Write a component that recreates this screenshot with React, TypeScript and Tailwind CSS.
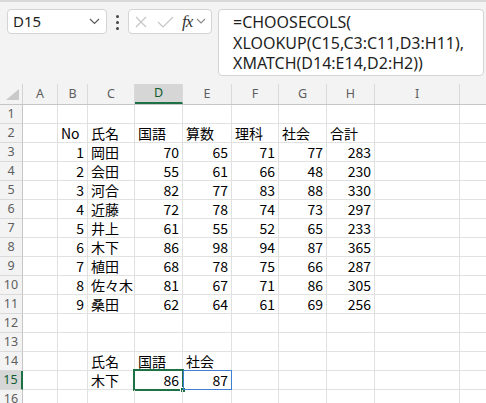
import React from "react";

const COLS = [
  { k: "A", w: 35 },
  { k: "B", w: 30 },
  { k: "C", w: 47 },
  { k: "D", w: 48 },
  { k: "E", w: 49 },
  { k: "F", w: 47 },
  { k: "G", w: 48 },
  { k: "H", w: 48 },
  { k: "I", w: 85 },
  { k: "", w: 60 },
];

type Cell = { t: string; r?: boolean };

const data: [number, string, number, number, number, number, number][] = [
  [1, "岡田", 70, 65, 71, 77, 283],
  [2, "会田", 55, 61, 66, 48, 230],
  [3, "河合", 82, 77, 83, 88, 330],
  [4, "近藤", 72, 78, 74, 73, 297],
  [5, "井上", 61, 55, 52, 65, 233],
  [6, "木下", 86, 98, 94, 87, 365],
  [7, "植田", 68, 78, 75, 66, 287],
  [8, "佐々木", 81, 67, 71, 86, 305],
  [9, "桑田", 62, 64, 61, 69, 256],
];

function rowCells(r: number): Record<string, Cell> {
  if (r === 2)
    return {
      B: { t: "No" },
      C: { t: "氏名" },
      D: { t: "国語" },
      E: { t: "算数" },
      F: { t: "理科" },
      G: { t: "社会" },
      H: { t: "合計" },
    };
  if (r >= 3 && r <= 11) {
    const d = data[r - 3];
    return {
      B: { t: String(d[0]), r: true },
      C: { t: d[1] },
      D: { t: String(d[2]), r: true },
      E: { t: String(d[3]), r: true },
      F: { t: String(d[4]), r: true },
      G: { t: String(d[5]), r: true },
      H: { t: String(d[6]), r: true },
    };
  }
  if (r === 14) return { C: { t: "氏名" }, D: { t: "国語" }, E: { t: "社会" } };
  if (r === 15) return { C: { t: "木下" }, D: { t: "86", r: true }, E: { t: "87", r: true } };
  return {};
}

const font = { fontFamily: '"Noto Sans CJK JP", "Noto Sans", sans-serif' };

export default function App() {
  const rows = Array.from({ length: 16 }, (_, i) => i + 1);
  return (
    <div className="w-[486px] h-[403px] overflow-hidden bg-[#f3f3f3] relative" style={font}>
      {/* top shadow line */}
      <div className="h-[2px] bg-[#d9d9d9]" />
      {/* formula bar */}
      <div className="h-[82px] flex items-start pt-[7px] pl-[7px]">
        <div className="w-[100px] h-[25px] bg-white border border-[#d4d4d4] rounded-[4px] flex items-center pl-[5px] pr-[5px] justify-between">
          <span className="text-[15px] text-[#1f1f1f] leading-none" style={{ fontFamily: '"Noto Sans", sans-serif' }}>D15</span>
          <svg width="11" height="7" viewBox="0 0 11 7" className="mr-[1px]">
            <path d="M1 1 L5.5 5.5 L10 1" fill="none" stroke="#5a5a5a" strokeWidth="1.2" />
          </svg>
        </div>
        <div className="w-[21px] h-[25px] flex flex-col items-center justify-center gap-[3px] pt-[1px]">
          <div className="w-[3px] h-[3px] bg-[#444] rounded-full" />
          <div className="w-[3px] h-[3px] bg-[#444] rounded-full" />
          <div className="w-[3px] h-[3px] bg-[#444] rounded-full" />
        </div>
        <div className="w-[84px] h-[25px] bg-white border border-[#d4d4d4] rounded-[4px] flex items-center pl-[6px]">
          <svg width="12" height="12" viewBox="0 0 12 12">
            <path d="M1 1 L11 11 M11 1 L1 11" stroke="#c4c4c4" strokeWidth="1.1" />
          </svg>
          <svg width="17" height="12" viewBox="0 0 17 12" className="ml-[10px]">
            <path d="M1 6 L6 11 L16 1" fill="none" stroke="#c4c4c4" strokeWidth="1.1" />
          </svg>
          <span
            className="ml-[8px] text-[17px] leading-none italic text-[#333] tracking-[-1px]"
            style={{ fontFamily: '"Liberation Serif", "DejaVu Serif", serif' }}
          >
            fx
          </span>
          <svg width="10" height="7" viewBox="0 0 10 7" className="ml-[4px]">
            <path d="M1 1 L5 5 L9 1" fill="none" stroke="#8a8a8a" strokeWidth="1.1" />
          </svg>
        </div>
        <div className="ml-[6px] w-[266px] h-[67px] bg-white border border-[#d4d4d4] rounded-[4px] pl-[14px] pt-[2px]">
          <div
            className="text-[16px] leading-[20.5px] text-[#1f1f1f] whitespace-pre"
            style={{ fontFamily: '"Noto Sans", sans-serif' }}
          >
            <div>=CHOOSECOLS(</div>
            <div>XLOOKUP(C15,C3:C11,D3:H11),</div>
            <div>XMATCH(D14:E14,D2:H2))</div>
          </div>
        </div>
      </div>
      {/* column headers */}
      <div className="flex h-[21px] bg-[#f3f3f3] border-b border-[#c6c6c6]">
        <div className="w-[23px] shrink-0 border-r border-[#d4d4d4] relative">
          <svg width="14" height="12" viewBox="0 0 14 12" className="absolute right-[2px] bottom-[3px]">
            <path d="M13 0 L13 11 L0 11 Z" fill="#c9c9c9" />
          </svg>
        </div>
        {COLS.map((c, i) => (
          <div
            key={i}
            className={
              "shrink-0 border-r border-[#dadada] flex items-center justify-center text-[12.5px] " +
              (c.k === "D"
                ? "bg-[#d6d6d6] text-[#0e5c2f] border-b-2 border-b-[#1e7145]"
                : "text-[#5e5e5e]")
            }
            style={{ width: c.w, fontFamily: '"Noto Sans", sans-serif' }}
          >
            {c.k}
          </div>
        ))}
      </div>
      {/* rows */}
      <div className="bg-white">
        {rows.map((r) => {
          const cells = rowCells(r);
          return (
            <div key={r} className="flex h-[19px]">
              <div
                className={
                  "w-[23px] shrink-0 border-b border-[#dadada] flex items-center justify-center text-[12.5px] " +
                  (r === 15
                    ? "bg-[#d6d6d6] text-[#0e5c2f] border-r-2 border-r-[#1e7145]"
                    : "bg-[#f3f3f3] text-[#5e5e5e] border-r border-r-[#c6c6c6]")
                }
                style={{ fontFamily: '"Noto Sans", sans-serif' }}
              >
                {r}
              </div>
              {COLS.map((c, i) => {
                const cell = cells[c.k];
                const sel = r === 15 && c.k === "D";
                const spill = r === 15 && c.k === "E";
                return (
                  <div
                    key={i}
                    className={
                      "shrink-0 border-r border-b border-[#e1e1e1] relative flex items-center text-[14px] text-black leading-none px-[3px] whitespace-nowrap " +
                      (cell?.r ? "justify-end" : "justify-start")
                    }
                    style={{ width: c.w }}
                  >
                    {cell?.t}
                    {sel && (
                      <>
                        <div className="absolute left-[-2px] top-[-2px] right-[-2px] bottom-[-2px] border-2 border-[#1e7145] pointer-events-none" />
                        <div className="absolute right-[-4px] bottom-[-4px] w-[6px] h-[6px] bg-[#1e7145] border border-white" />
                      </>
                    )}
                    {spill && (
                      <div className="absolute left-0 top-[-1px] right-[-1px] bottom-[-1px] border border-[#3f7fd4] pointer-events-none" />
                    )}
                  </div>
                );
              })}
            </div>
          );
        })}
      </div>
    </div>
  );
}
